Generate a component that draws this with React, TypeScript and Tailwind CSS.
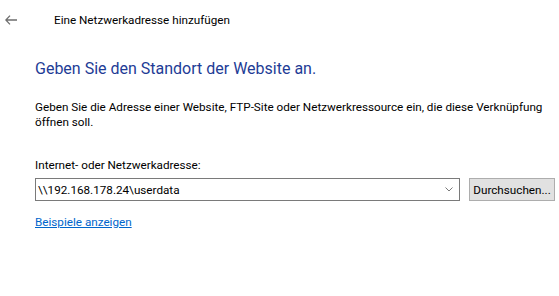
const font = { fontFamily: 'Roboto, "Noto Sans", sans-serif' }

function BackArrow() {
  return (
    <svg width="12" height="10" viewBox="0 0 12 10" className="ml-[5px] shrink-0" fill="none" stroke="#6e6e6e" strokeWidth="1.3">
      <path d="M0.8 5H12M5 0.6L0.8 5L5 9.4" />
    </svg>
  )
}

function Chevron() {
  return (
    <svg width="8" height="5" viewBox="0 0 8 5" className="mr-[6px] shrink-0" fill="none" stroke="#7a7a7a" strokeWidth="1">
      <path d="M0.5 0.5L4 4L7.5 0.5" />
    </svg>
  )
}

export default function App() {
  return (
    <div className="w-[559px] h-[296px] bg-white text-black overflow-hidden" style={font}>
      {/* header */}
      <div className="flex items-center h-[16px] mt-[12px]">
        <BackArrow />
        <span className="ml-[37px] text-[11.7px] leading-[16px]">Eine Netzwerkadresse hinzufügen</span>
      </div>

      <div className="pl-[35px] pr-[4px]">
        <h1 className="mt-[30px] text-[16px] leading-[22px] text-[#1e3c96]">
          Geben Sie den Standort der Website an.
        </h1>
        <p className="mt-[20px] text-[11.7px] leading-[15px]">
          Geben Sie die Adresse einer Website, FTP-Site oder Netzwerkressource ein, die diese Verknüpfung
          öffnen soll.
        </p>
        <label className="block mt-[27px] text-[11.7px] leading-[16px]">Internet- oder Netzwerkadresse:</label>
        <div className="flex items-center gap-[9px] mt-[5px]">
          <div className="flex items-center w-[425px] h-[23px] border border-[#7a7a7a] bg-white">
            <span className="flex-1 pl-[2px] text-[11.7px] leading-[16px]">\\192.168.178.24\userdata</span>
            <Chevron />
          </div>
          <button className="h-[23px] w-[86px] border border-[#adadad] bg-[#e1e1e1] text-[11.7px] leading-[16px] whitespace-nowrap">
            Durchsuchen...
          </button>
        </div>
        <a href="#" className="inline-block mt-[13px] text-[11.7px] leading-[16px] text-[#0066cc] underline">
          Beispiele anzeigen
        </a>
      </div>
    </div>
  )
}
